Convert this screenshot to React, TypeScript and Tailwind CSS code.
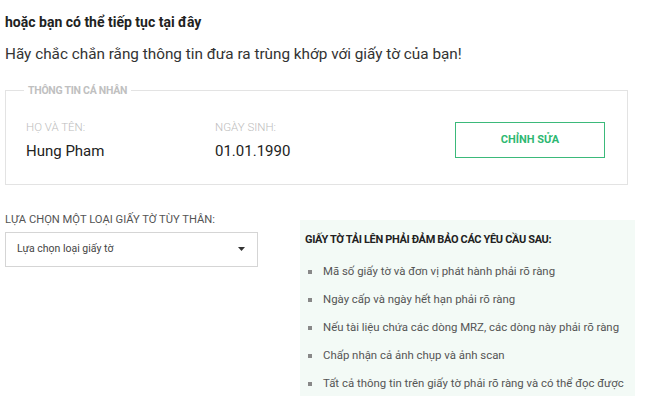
export default function App() {
  const rules = [
    "Mã số giấy tờ và đơn vị phát hành phải rõ ràng",
    "Ngày cấp và ngày hết hạn phải rõ ràng",
    "Nếu tài liệu chứa các dòng MRZ, các dòng này phải rõ ràng",
    "Chấp nhận cả ảnh chụp và ảnh scan",
    "Tất cả thông tin trên giấy tờ phải rõ ràng và có thể đọc được",
  ];

  return (
    <div className="w-[647px] h-[410px] bg-white text-[#222] font-['Roboto',sans-serif] overflow-hidden">
      <div className="pl-[5px] pr-[12px] pt-[12px]">
        <h2 className="text-[14px] font-bold leading-[20px] text-[#222]">hoặc bạn có thể tiếp tục tại đây</h2>
        <p className="mt-[12px] text-[15.3px] leading-[20px] text-[#333]">
          Hãy chắc chắn rằng thông tin đưa ra trùng khớp với giấy tờ của bạn!
        </p>

        {/* Personal info */}
        <fieldset className="mt-[19px] mr-[7px] border border-[#e3e3e3] pl-[20px] pr-[22px] pt-[21px] pb-[23px]">
          <legend className="px-[4px] -ml-[2px] text-[10.5px] font-bold text-[#c0c0c0] tracking-tight">
            THÔNG TIN CÁ NHÂN
          </legend>
          <div className="flex items-center">
            <div className="w-[189px]">
              <div className="text-[11.5px] font-light text-[#bdbdbd] leading-[14px]">HỌ VÀ TÊN:</div>
              <div className="mt-[7px] text-[15px] leading-[20px] text-[#222]">Hung Pham</div>
            </div>
            <div className="flex-1">
              <div className="text-[11.5px] font-light text-[#bdbdbd] leading-[14px]">NGÀY SINH:</div>
              <div className="mt-[7px] text-[15px] leading-[20px] text-[#222]">01.01.1990</div>
            </div>
            <button className="w-[150px] h-[36px] border border-[#3bb97a] text-[#2eb872] text-[11px] font-bold">
              CHỈNH SỬA
            </button>
          </div>
        </fieldset>

        <div className="mt-[28px] flex items-start gap-[42px]">
          <div className="w-[253px]">
            <div className="text-[11.2px] text-[#555] leading-[14px]">LỰA CHỌN MỘT LOẠI GIẤY TỜ TÙY THÂN:</div>
            <div className="mt-[5px] h-[35px] border border-[#d5d5d5] flex items-center justify-between pl-[11px] pr-[12px]">
              <span className="text-[10.5px] text-[#444]">Lựa chọn loại giấy tờ</span>
              <svg width="7" height="4" viewBox="0 0 7 4"><path d="M0 0h7L3.5 4z" fill="#333" /></svg>
            </div>
          </div>

          <div className="mt-[7px] w-[335px] h-[176px] bg-[#f3faf6] pl-[5px] pt-[13px]">
            <div className="text-[11px] font-bold text-[#222] leading-[14px] tracking-[-0.35px]">
              GIẤY TỜ TẢI LÊN PHẢI ĐẢM BẢO CÁC YÊU CẦU SAU:
            </div>
            <ul className="mt-[17px] flex flex-col gap-[12px]">
              {rules.map((r) => (
                <li key={r} className="flex items-center h-[16px] text-[11.4px] text-[#555]">
                  <span className="w-[4px] h-[4px] bg-[#888] ml-[3px] mr-[11px]" />
                  {r}
                </li>
              ))}
            </ul>
          </div>
        </div>
      </div>
    </div>
  );
}
